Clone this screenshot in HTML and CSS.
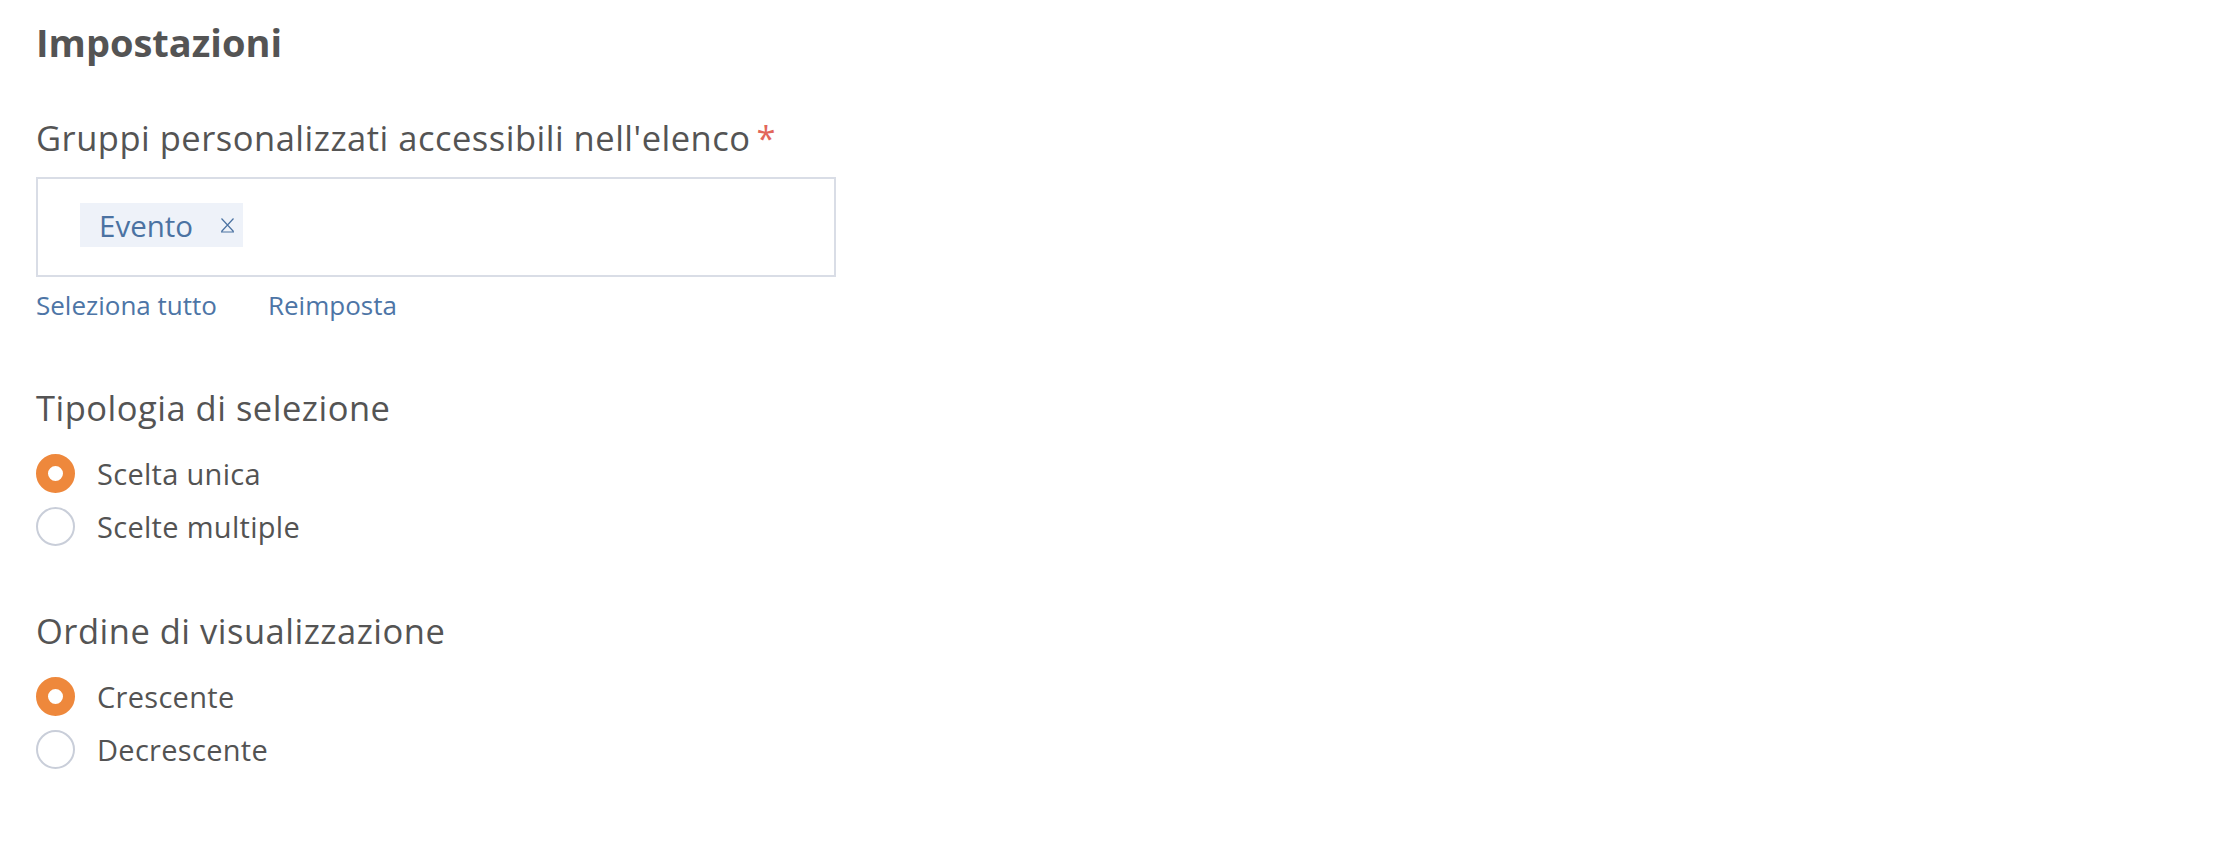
FILE: index.html
```html
<!DOCTYPE html>
<html lang="it">
<head>
<meta charset="utf-8">
<title>Impostazioni</title>
<link rel="stylesheet" href="styles.css">
</head>
<body>
<main class="settings">
  <h1 class="title">Impostazioni</h1>

  <section class="field">
    <div class="label">Gruppi personalizzati accessibili nell'elenco<span class="req">*</span></div>
    <div class="tagbox">
      <span class="tag">Evento
        <svg class="tag-x" width="15" height="16" viewBox="0 0 15 16" aria-hidden="true">
          <path d="M1.5 1.5 L13.5 14.5 M13.5 1.5 L1.5 14.5 M1 15 H14" stroke="currentColor" stroke-width="1.2" fill="none"/>
        </svg>
      </span>
    </div>
    <div class="links">
      <a class="link">Seleziona tutto</a>
      <a class="link">Reimposta</a>
    </div>
  </section>

  <section class="group group-first">
    <div class="label">Tipologia di selezione</div>
    <div class="radios">
      <label class="radio"><span class="dot checked"></span><span class="rtext">Scelta unica</span></label>
      <label class="radio"><span class="dot"></span><span class="rtext">Scelte multiple</span></label>
    </div>
  </section>

  <section class="group">
    <div class="label">Ordine di visualizzazione</div>
    <div class="radios">
      <label class="radio"><span class="dot checked"></span><span class="rtext">Crescente</span></label>
      <label class="radio"><span class="dot"></span><span class="rtext">Decrescente</span></label>
    </div>
  </section>
</main>
</body>
</html>
```

FILE: styles.css
```css
html, body {
  margin: 0;
  padding: 0;
  background: #ffffff;
}

body {
  font-family: "Open Sans", Lato, sans-serif;
  color: #535353;
}

.settings {
  padding: 18px 0 0 36px;
}

.title {
  margin: 0;
  font-size: 38px;
  line-height: 48px;
  font-weight: 700;
  color: #545454;
}

.field {
  margin-top: 53px;
}

.label {
  font-size: 34.5px;
  line-height: 37px;
  letter-spacing: 0.5px;
  font-weight: 500;
  color: #545454;
}

.req {
  color: #e2675a;
  margin-left: 6px;
}

.tagbox {
  margin-top: 21px;
  width: 800px;
  height: 100px;
  box-sizing: border-box;
  border: 2px solid #d9dde6;
  padding: 24px 0 0 42px;
}

.tag {
  display: inline-flex;
  align-items: center;
  height: 44px;
  padding: 0 8px 0 19px;
  background: #eef2f9;
  color: #4b72a2;
  font-size: 29.5px;
  gap: 27px;
}

.tag-x {
  display: block;
  color: #4b72a2;
}

.links {
  margin-top: 13px;
  display: flex;
  gap: 51px;
}

.link {
  font-size: 26px;
  line-height: 31px;
  color: #4d75a6;
  cursor: pointer;
}

.group {
  margin-top: 66px;
}

.group-first {
  margin-top: 68px;
}

.radios {
  margin-top: 28px;
  display: flex;
  flex-direction: column;
  gap: 14px;
}

.radio {
  display: flex;
  align-items: center;
  gap: 22px;
  height: 39px;
}

.dot {
  width: 39px;
  height: 39px;
  box-sizing: border-box;
  border-radius: 50%;
  border: 2px solid #c9ced9;
  background: #fff;
  flex: none;
}

.dot.checked {
  border: 12px solid #ee883c;
}

.rtext {
  font-size: 29px;
  line-height: 39px;
  letter-spacing: 0.3px;
  color: #535353;
}
```
